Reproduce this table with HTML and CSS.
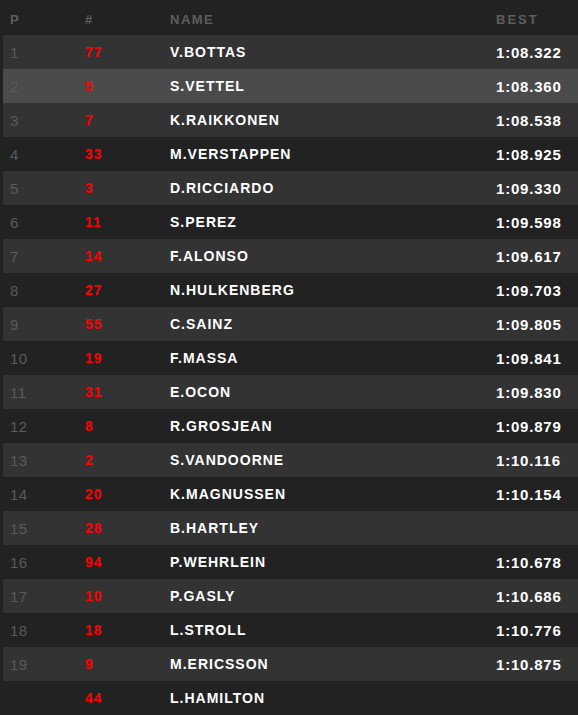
FILE: index.html
```html
<!DOCTYPE html>
<html>
<head>
<meta charset="utf-8">
<link rel="stylesheet" href="styles.css">
</head>
<body>
<div class="table">
  <div class="row head">
    <span class="c-pos">P</span><span class="c-num">#</span><span class="c-name">NAME</span><span class="c-best">BEST</span>
  </div>
  <div class="row alt"><span class="c-pos">1</span><span class="c-num">77</span><span class="c-name">V.BOTTAS</span><span class="c-best">1:08.322</span></div>
  <div class="row hl"><span class="c-pos">2</span><span class="c-num">5</span><span class="c-name">S.VETTEL</span><span class="c-best">1:08.360</span></div>
  <div class="row alt"><span class="c-pos">3</span><span class="c-num">7</span><span class="c-name">K.RAIKKONEN</span><span class="c-best">1:08.538</span></div>
  <div class="row"><span class="c-pos">4</span><span class="c-num">33</span><span class="c-name">M.VERSTAPPEN</span><span class="c-best">1:08.925</span></div>
  <div class="row alt"><span class="c-pos">5</span><span class="c-num">3</span><span class="c-name">D.RICCIARDO</span><span class="c-best">1:09.330</span></div>
  <div class="row"><span class="c-pos">6</span><span class="c-num">11</span><span class="c-name">S.PEREZ</span><span class="c-best">1:09.598</span></div>
  <div class="row alt"><span class="c-pos">7</span><span class="c-num">14</span><span class="c-name">F.ALONSO</span><span class="c-best">1:09.617</span></div>
  <div class="row"><span class="c-pos">8</span><span class="c-num">27</span><span class="c-name">N.HULKENBERG</span><span class="c-best">1:09.703</span></div>
  <div class="row alt"><span class="c-pos">9</span><span class="c-num">55</span><span class="c-name">C.SAINZ</span><span class="c-best">1:09.805</span></div>
  <div class="row"><span class="c-pos">10</span><span class="c-num">19</span><span class="c-name">F.MASSA</span><span class="c-best">1:09.841</span></div>
  <div class="row alt"><span class="c-pos">11</span><span class="c-num">31</span><span class="c-name">E.OCON</span><span class="c-best">1:09.830</span></div>
  <div class="row"><span class="c-pos">12</span><span class="c-num">8</span><span class="c-name">R.GROSJEAN</span><span class="c-best">1:09.879</span></div>
  <div class="row alt"><span class="c-pos">13</span><span class="c-num">2</span><span class="c-name">S.VANDOORNE</span><span class="c-best">1:10.116</span></div>
  <div class="row"><span class="c-pos">14</span><span class="c-num">20</span><span class="c-name">K.MAGNUSSEN</span><span class="c-best">1:10.154</span></div>
  <div class="row alt"><span class="c-pos">15</span><span class="c-num">28</span><span class="c-name">B.HARTLEY</span><span class="c-best"></span></div>
  <div class="row"><span class="c-pos">16</span><span class="c-num">94</span><span class="c-name">P.WEHRLEIN</span><span class="c-best">1:10.678</span></div>
  <div class="row alt"><span class="c-pos">17</span><span class="c-num">10</span><span class="c-name">P.GASLY</span><span class="c-best">1:10.686</span></div>
  <div class="row"><span class="c-pos">18</span><span class="c-num">18</span><span class="c-name">L.STROLL</span><span class="c-best">1:10.776</span></div>
  <div class="row alt"><span class="c-pos">19</span><span class="c-num">9</span><span class="c-name">M.ERICSSON</span><span class="c-best">1:10.875</span></div>
  <div class="row"><span class="c-pos"></span><span class="c-num">44</span><span class="c-name">L.HAMILTON</span><span class="c-best"></span></div>
</div>
</body>
</html>
```
FILE: styles.css
```css
html, body {
  margin: 0;
  padding: 0;
  background: #222222;
}
body {
  font-family: "Liberation Sans", Arial, sans-serif;
  font-weight: bold;
  overflow: hidden;
}
.table {
  padding-left: 3px;
}
.row {
  display: grid;
  grid-template-columns: 82px 85px 326px 1fr;
  height: 34px;
  align-items: center;
  font-size: 14px;
  letter-spacing: 1px;
  color: #ffffff;
}
.row.head {
  height: 35px;
  font-size: 13px;
  letter-spacing: 1.5px;
  color: #5e5e5e;
  padding-top: 4px;
  box-sizing: border-box;
}
.row.alt { background: #333333; }
.row.hl { background: #4b4b4b; }
.c-pos { padding-left: 7px; }
.row .c-pos { color: #5a5a5a; font-weight: normal; font-size: 15px; letter-spacing: 0.5px; }
.row.head .c-pos { color: #5e5e5e; font-weight: bold; font-size: 13px; }
.row .c-num { color: #ff0000; }
.row.head .c-num { color: #5e5e5e; }
.c-best { font-size: 15px; letter-spacing: 0.8px; }
.row.head .c-best { font-size: 13px; letter-spacing: 2px; }
```
